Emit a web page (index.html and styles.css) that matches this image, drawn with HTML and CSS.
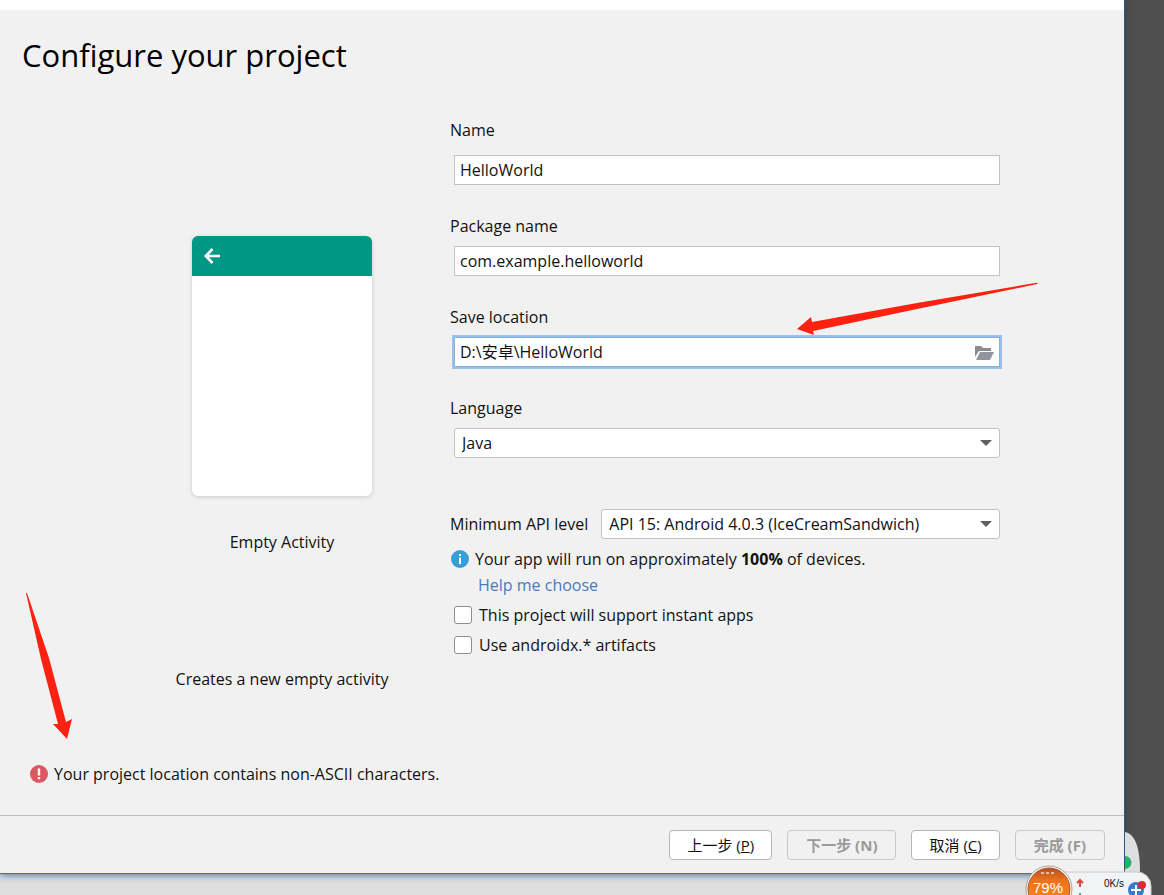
FILE: index.html
```html
<!DOCTYPE html>
<html lang="zh-CN">
<head>
<meta charset="utf-8">
<meta name="viewport" content="width=device-width, initial-scale=1">
<title>Configure your project</title>
<link rel="stylesheet" href="styles.css">
</head>
<body>
<div class="desktop">
  <main class="dialog">
    <div class="titlebar"></div>
    <h1 class="heading">Configure your project</h1>
    <div class="content">
      <section class="template">
        <div class="preview">
          <div class="preview-bar">
            <svg width="16" height="16" viewBox="0 0 16 16" fill="none" stroke="#fff" stroke-width="2.600" aria-hidden="true"><path d="M16 8H2M8.500 1L1.800 8l6.700 7"/></svg>
          </div>
        </div>
        <p class="template-name">Empty Activity</p>
        <p class="template-note">Creates a new empty activity</p>
      </section>
      <form class="form" id="project">
        <div class="field field-first">
          <label for="name">Name</label>
          <input class="control" id="name" type="text" value="HelloWorld">
        </div>
        <div class="field">
          <label for="package">Package name</label>
          <input class="control" id="package" type="text" value="com.example.helloworld">
        </div>
        <div class="field">
          <label for="location">Save location</label>
          <div class="control location">
            <input class="location-input" id="location" type="text" value="D:\安卓\HelloWorld">
            <button class="browse" type="button" aria-label="Browse">
              <svg width="19" height="15" viewBox="0 0 19 15" aria-hidden="true"><path fill="#8a8d90" d="M0 12V1h6l2 2h8v3H4z"/><path fill="#8f969d" d="M5 7h14l-4 8H1z"/></svg>
            </button>
          </div>
        </div>
        <div class="field">
          <label for="language">Language</label>
          <div class="control picker">
            <select class="select" id="language"><option>Java</option></select>
            <svg class="caret" width="12" height="6" viewBox="0 0 12 6" aria-hidden="true"><path fill="#5f5f5f" d="M0 0h12L6 6z"/></svg>
          </div>
        </div>
        <div class="api">
          <label for="api">Minimum API level</label>
          <div class="control picker api-picker">
            <select class="select" id="api"><option>API 15: Android 4.0.3 (IceCreamSandwich)</option></select>
            <svg class="caret" width="12" height="6" viewBox="0 0 12 6" aria-hidden="true"><path fill="#5f5f5f" d="M0 0h12L6 6z"/></svg>
          </div>
        </div>
        <p class="info">
          <svg width="18" height="18" viewBox="0 0 18 18" aria-hidden="true"><circle cx="9" cy="9" r="9" fill="#389fd6"/><path fill="#fff" d="M8 4h2v2H8zM8 7.500h2V14H8z"/></svg>
          <span>Your app will run on approximately <b>100%</b> of devices.</span>
        </p>
        <a class="help" href="#help">Help me choose</a>
        <label class="check"><input class="box" type="checkbox">This project will support instant apps</label>
        <label class="check"><input class="box" type="checkbox">Use androidx.* artifacts</label>
      </form>
    </div>
    <p class="error">
      <svg width="18" height="18" viewBox="0 0 18 18" aria-hidden="true"><circle cx="9" cy="9" r="9" fill="#db5860"/><path fill="#fff" d="M7.800 3.500h2.400v7H7.800zM7.800 12h2.400v2.200H7.800z"/></svg>
      <span>Your project location contains non-ASCII characters.</span>
    </p>
    <footer class="footer">
      <button class="button" type="button">上一步 (<u>P</u>)</button>
      <button class="button" type="button" disabled>下一步 (N)</button>
      <button class="button" type="button">取消 (<u>C</u>)</button>
      <button class="button" type="button" disabled>完成 (F)</button>
    </footer>
  </main>

  <svg class="arrow arrow-location" width="242" height="54" viewBox="0 0 242 54" aria-hidden="true"><path fill="#fc2110" d="M0 48L14 36L15 41L120 22L238 2Q242 1 240 3L120 28L16 50L17 54z"/></svg>
  <svg class="arrow arrow-error" width="46" height="147" viewBox="0 0 46 147" aria-hidden="true"><path fill="#fc2110" d="M0 0H1L23 65L40 129L46 126L41 146L27 131L32 131L15 66z"/></svg>

  <div class="speed" role="status">
    <svg class="speed-art" width="140" height="65" viewBox="0 0 140 65" aria-hidden="true">
      <defs>
        <linearGradient id="orange" x1="0" y1="0" x2="0" y2="1"><stop offset="0" stop-color="#b84f20"/><stop offset=".3" stop-color="#ed721c"/><stop offset="1" stop-color="#ff9321"/></linearGradient>
      </defs>
      <path fill="#dcdedf" d="M101 2C111 4 116 17 116 42H101z"/>
      <path fill="#22b664" d="M101 26a6 6 0 0 1 0 13z"/>
      <rect x="24" y="42" width="103" height="44" rx="14" fill="#f2f3f4" stroke="#c6cacd"/>
      <circle cx="25" cy="59" r="23" fill="#fff" stroke="#ad9b90"/>
      <circle cx="25" cy="59" r="21" fill="url(#orange)" stroke="#a7522d"/>
      <path d="M17 43h15" stroke="#e6bda6" stroke-width="2" stroke-dasharray="3 2"/>
      <path fill="none" stroke="#df4545" stroke-width="2" d="M56 57v-6M53 53l3-3 3 3"/>
      <path stroke="#47a89a" stroke-width="2" d="M56 63v2"/>
      <circle cx="112" cy="60" r="8" fill="#347cd0"/>
      <path stroke="#fff" stroke-width="2" d="M107 60h10M112 55v10"/>
      <circle cx="118" cy="55" r="4" fill="#e32638"/>
    </svg>
    <span class="speed-percent">79%</span>
    <span class="speed-rate">0K/s</span>
  </div>
</div>
</body>
</html>
```
FILE: styles.css
```css
* {
  box-sizing: border-box;
}

body {
  margin: 0;
  font: 16px/20px "Open Sans", "Noto Sans CJK SC", sans-serif;
  color: #111;
}

h1,
p {
  margin: 0;
}

input,
select,
button {
  font: inherit;
  color: inherit;
}

.desktop {
  position: relative;
  min-height: 100vh;
  overflow: hidden;
  padding-right: 39px;
  background: linear-gradient(#4f4f4f, #4f4f4f) right / 39px 100% no-repeat, #dedede;
}

.dialog {
  background: #f1f1f1;
  border-right: 1px solid #2d5878;
  border-bottom: 1px solid #2e77a8;
  box-shadow: 0 1px 7px rgba(30, 60, 90, 0.7);
}

.titlebar {
  height: 10px;
  background: #fff;
}

.heading {
  padding: 24px 22px 0;
  font-size: 31px;
  font-weight: 400;
  line-height: 42px;
  color: #000;
}

.content {
  display: flex;
  padding: 44px 124px 0 0;
}

.template {
  flex: 0 0 450px;
  display: flex;
  flex-direction: column;
  align-items: center;
  padding: 116px 56px 0 170px;
}

.preview {
  width: 180px;
  height: 260px;
  overflow: hidden;
  background: #fff;
  border-radius: 6px;
  box-shadow: 0 1px 4px rgba(0, 0, 0, 0.16);
}

.preview-bar {
  display: flex;
  align-items: center;
  height: 40px;
  padding-left: 12px;
  background: #009785;
}

.template-name {
  margin-top: 36px;
}

.template-note {
  margin-top: 117px;
  white-space: nowrap;
}

.form {
  flex: 1;
  display: flex;
  flex-direction: column;
  min-width: 0;
}

.field {
  display: flex;
  flex-direction: column;
  gap: 10px;
  margin-bottom: 31px;
}

.field-first {
  gap: 15px;
}

.control {
  height: 30px;
  margin-left: 4px;
  padding: 0 5px;
  border: 1px solid #c2c2c2;
  background: #fff;
}

.location {
  display: flex;
  align-items: center;
  border-color: #86b2df;
  box-shadow: 0 0 0 2px #9dc0e9;
}

.location-input {
  flex: 1;
  min-width: 0;
  padding: 0;
  border: 0;
  outline: 0;
  background: none;
}

.browse {
  display: flex;
  padding: 0;
  border: 0;
  background: none;
}

.picker {
  display: grid;
  align-items: center;
  padding: 0 7px;
  border-radius: 3px;
}

.select {
  grid-area: 1 / 1;
  width: 100%;
  padding: 0;
  border: 0;
  appearance: none;
  background: none;
}

.caret {
  grid-area: 1 / 1;
  justify-self: end;
  pointer-events: none;
}

.api {
  display: flex;
  align-items: center;
  gap: 9px;
  margin-top: 20px;
}

.api-picker {
  flex: 1;
}

.info {
  display: flex;
  align-items: center;
  gap: 6px;
  margin: 10px 0 6px;
  padding-left: 1px;
}

.help {
  align-self: flex-start;
  margin-left: 28px;
  color: #4b79bd;
  text-decoration: none;
}

.check {
  display: flex;
  align-items: center;
  gap: 7px;
  margin: 10px 0 0 4px;
}

.box {
  width: 18px;
  height: 18px;
  margin: 0;
  appearance: none;
  background: #fff;
  border: 1px solid #8e8e8e;
  border-radius: 3px;
}

.error {
  display: flex;
  align-items: center;
  gap: 6px;
  margin-top: 75px;
  padding: 0 30px 31px;
}

.footer {
  display: flex;
  justify-content: flex-end;
  gap: 15px;
  padding: 14px 19px 13px;
  border-top: 1px solid #bdbdbd;
}

.button {
  height: 30px;
  padding: 0 17px;
  border: 1px solid #b5b5b5;
  border-radius: 4px;
  background: #fff;
  font-size: 15px;
}

.button:disabled {
  padding: 0 18px;
  border-color: #c8c8c8;
  background: #f1f1f1;
  color: #9a9a9a;
  font-weight: 700;
}

.arrow {
  position: absolute;
  pointer-events: none;
}

.arrow-location {
  left: 797px;
  top: 281px;
}

.arrow-error {
  left: 26px;
  top: 593px;
}

.speed {
  position: absolute;
  left: 1024px;
  top: 830px;
  width: 140px;
  height: 65px;
  font-family: "Liberation Sans", sans-serif;
}

.speed-art {
  display: block;
}

.speed-percent {
  position: absolute;
  left: 9px;
  top: 51px;
  font-size: 15px;
  line-height: 14px;
  color: #fff;
}

.speed-rate {
  position: absolute;
  left: 80px;
  top: 44px;
  font-size: 10px;
}
```
